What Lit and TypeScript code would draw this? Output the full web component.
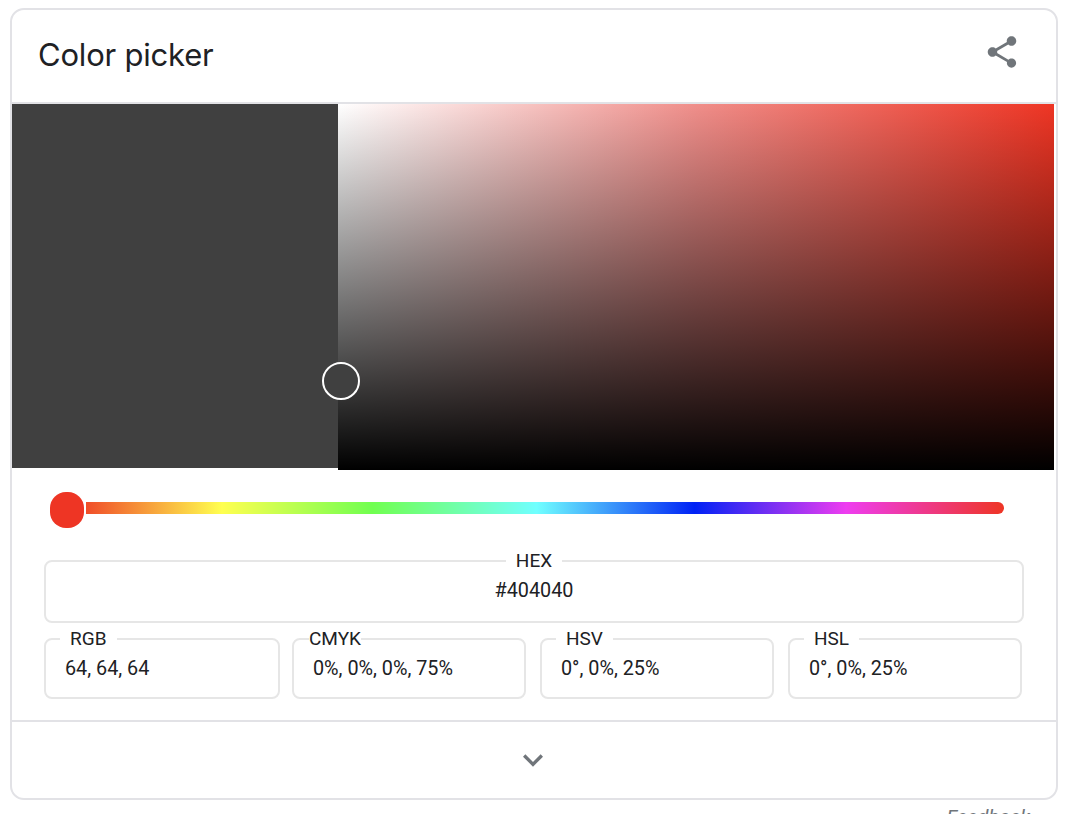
import { LitElement, html, css } from 'lit';
import { customElement } from 'lit/decorators.js';

@customElement('app-root')
export class AppRoot extends LitElement {
  static styles = css`
    :host {
      display: block;
      height: 814px;
      overflow: hidden;
      padding: 8px 20px 0 10px;
      box-sizing: border-box;
      background: #fff;
      font-family: Roboto, sans-serif;
      color: #202124;
    }
    .card {
      box-sizing: border-box;
      height: 792px;
      border: 2px solid #e2e2e6;
      border-radius: 14px;
      display: flex;
      flex-direction: column;
    }
    .header {
      height: 92px;
      flex: none;
      display: flex;
      align-items: center;
      justify-content: space-between;
      padding: 0 35px 0 26px;
      border-bottom: 2px solid #e2e2e6;
    }
    .title {
      font-family: Inter, sans-serif;
      font-size: 31px;
      letter-spacing: -0.2px;
      margin-bottom: 4px;
    }
    .share {
      width: 38px;
      height: 38px;
      display: block;
      margin-bottom: 8px;
      fill: #70757a;
    }
    .picker {
      display: flex;
      align-items: flex-start;
      flex: none;
      height: 366px;
      margin-right: 2px;
    }
    .swatch {
      width: 326px;
      height: 364px;
      background: #404040;
      flex: none;
    }
    .field {
      position: relative;
      flex: 1;
      height: 100%;
      background:
        linear-gradient(to bottom, rgba(0, 0, 0, 0), #000),
        linear-gradient(to right, #fff, #f08e8a 50%, #ee3524);
    }
    .marker {
      position: absolute;
      left: -16px;
      top: 258px;
      width: 38px;
      height: 38px;
      box-sizing: border-box;
      border: 2px solid #fff;
      border-radius: 50%;
      background: #404040;
    }
    .hue {
      position: relative;
      flex: none;
      height: 12px;
      margin: 32px 52px 0 74px;
      border-radius: 0 6px 6px 0;
      background: linear-gradient(
        to right,
        #ee3524 -2%,
        #ffff50 14.8%,
        #70ff50 31.2%,
        #70ffff 49.1%,
        #0022f5 66.3%,
        #ee3df0 82.8%,
        #ee3524 100%
      );
    }
    .thumb {
      position: absolute;
      left: -36px;
      top: -10px;
      width: 34px;
      height: 36px;
      border-radius: 16px;
      background: #ee3524;
    }
    .values {
      flex: 1;
      padding: 37px 32px 0 32px;
    }
    fieldset {
      margin: 0;
      min-width: 0;
      padding: 0;
      border: 2px solid #e6e6e6;
      border-radius: 8px;
      box-sizing: border-box;
    }
    legend {
      font-size: 19px;
      line-height: 20px;
      padding: 0 10px;
    }
    .hex {
      height: 72px;
      text-align: center;
    }
    .hex legend {
      margin: 0 auto;
    }
    .hex .val {
      padding-left: 0;
    }
    .row {
      display: grid;
      grid-template-columns: 248px 248px 248px 234px;
      margin-top: 6px;
    }
    .row fieldset {
      width: 234px;
      height: 70px;
    }
    .row fieldset:first-child {
      width: 236px;
    }
    .row legend {
      margin-left: 14px;
    }
    .row .flush {
      margin-left: 15px;
      padding: 0;
    }
    .val {
      font-size: 19.8px;
      line-height: 22px;
      padding: 9px 0 0 19px;
    }
    .footer {
      height: 76px;
      flex: none;
      display: flex;
      align-items: center;
      justify-content: center;
      border-top: 2px solid #e2e2e6;
    }
    .chevron {
      display: block;
      width: 40px;
      height: 40px;
      margin-right: 2px;
      fill: #70757a;
    }
    .feedback {
      text-align: right;
      padding-right: 28px;
      margin-top: 5px;
      font-size: 20px;
      font-style: italic;
      color: #70757a;
    }
  `;

  private box(label: string, value: string, flush = false) {
    return html`<fieldset>
      <legend class=${flush ? 'flush' : ''}>${label}</legend>
      <div class="val">${value}</div>
    </fieldset>`;
  }

  render() {
    return html`
      <div class="card">
        <div class="header">
          <div class="title">Color picker</div>
          <svg class="share" viewBox="0 0 24 24"><path d="M18 16.08c-.76 0-1.44.3-1.96.77L8.91 12.7c.05-.23.09-.46.09-.7s-.04-.47-.09-.7l7.05-4.11c.54.5 1.25.81 2.04.81 1.66 0 3-1.34 3-3s-1.34-3-3-3-3 1.34-3 3c0 .24.04.47.09.7L8.04 9.81C7.5 9.31 6.79 9 6 9c-1.66 0-3 1.34-3 3s1.34 3 3 3c.79 0 1.5-.31 2.04-.81l7.12 4.16c-.05.21-.08.43-.08.65 0 1.61 1.31 2.92 2.92 2.92s2.92-1.31 2.92-2.92-1.31-2.92-2.92-2.92z"/></svg>
        </div>
        <div class="picker">
          <div class="swatch"></div>
          <div class="field"><div class="marker"></div></div>
        </div>
        <div class="hue"><div class="thumb"></div></div>
        <div class="values">
          <fieldset class="hex">
            <legend>HEX</legend>
            <div class="val">#404040</div>
          </fieldset>
          <div class="row">
            ${this.box('RGB', '64, 64, 64')}
            ${this.box('CMYK', '0%, 0%, 0%, 75%', true)}
            ${this.box('HSV', '0°, 0%, 25%')}
            ${this.box('HSL', '0°, 0%, 25%')}
          </div>
        </div>
        <div class="footer">
          <svg class="chevron" viewBox="0 0 24 24"><path d="M7.41 8.59L12 13.17l4.59-4.58L18 10l-6 6-6-6z"/></svg>
        </div>
      </div>
      <div class="feedback">Feedback</div>
    `;
  }
}
